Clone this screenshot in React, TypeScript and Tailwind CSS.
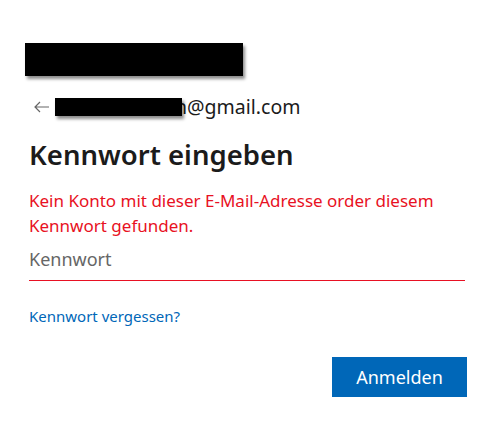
import React from "react";

export default function App() {
  return (
    <div
      className="w-[495px] h-[427px] bg-white overflow-hidden"
      style={{ fontFamily: '"Noto Sans", "Open Sans", sans-serif' }}
    >
      <div className="pl-[29px] pr-[30px] pt-[43px] flex flex-col">
        <div className="ml-[-4px] w-[218px] h-[33px] bg-black shadow-[2px_3px_3px_rgba(0,0,0,0.45)]" />

        <div className="mt-[21px] flex items-center h-[20px]">
          <svg width="16" height="12" viewBox="0 0 16 12" className="ml-[5px] text-[#666]">
            <path d="M6 1 L1 6 L6 11 M1 6 H15" fill="none" stroke="currentColor" strokeWidth="1.2" />
          </svg>
          <div className="relative z-10 ml-[5px] w-[127px] h-[18px] bg-black shadow-[2px_3px_3px_rgba(0,0,0,0.45)]" />
          <span className="ml-[-7px] text-[19.5px] leading-[20px] text-[#1b1b1b]">h@gmail.com</span>
        </div>

        <h1 className="mt-[20px] text-[27.5px] leading-[36px] font-semibold text-[#1b1b1b]">
          Kennwort eingeben
        </h1>

        <p className="mt-[15px] text-[17px] leading-[25px] text-[#e81123]">
          Kein Konto mit dieser E-Mail-Adresse order diesem Kennwort gefunden.
        </p>

        <div className="mt-[9px] h-[34px] border-b border-[#e81123] text-[18px] leading-[24px] text-[#666]">
          Kennwort
        </div>

        <a className="mt-[25px] text-[15px] leading-[20px] text-[#0067b8]">Kennwort vergessen?</a>

        <div className="mt-[31px] flex justify-end">
          <button className="w-[135px] h-[40px] bg-[#0067b8] text-white text-[18px] mr-[-2px]">
            Anmelden
          </button>
        </div>
      </div>
    </div>
  );
}
